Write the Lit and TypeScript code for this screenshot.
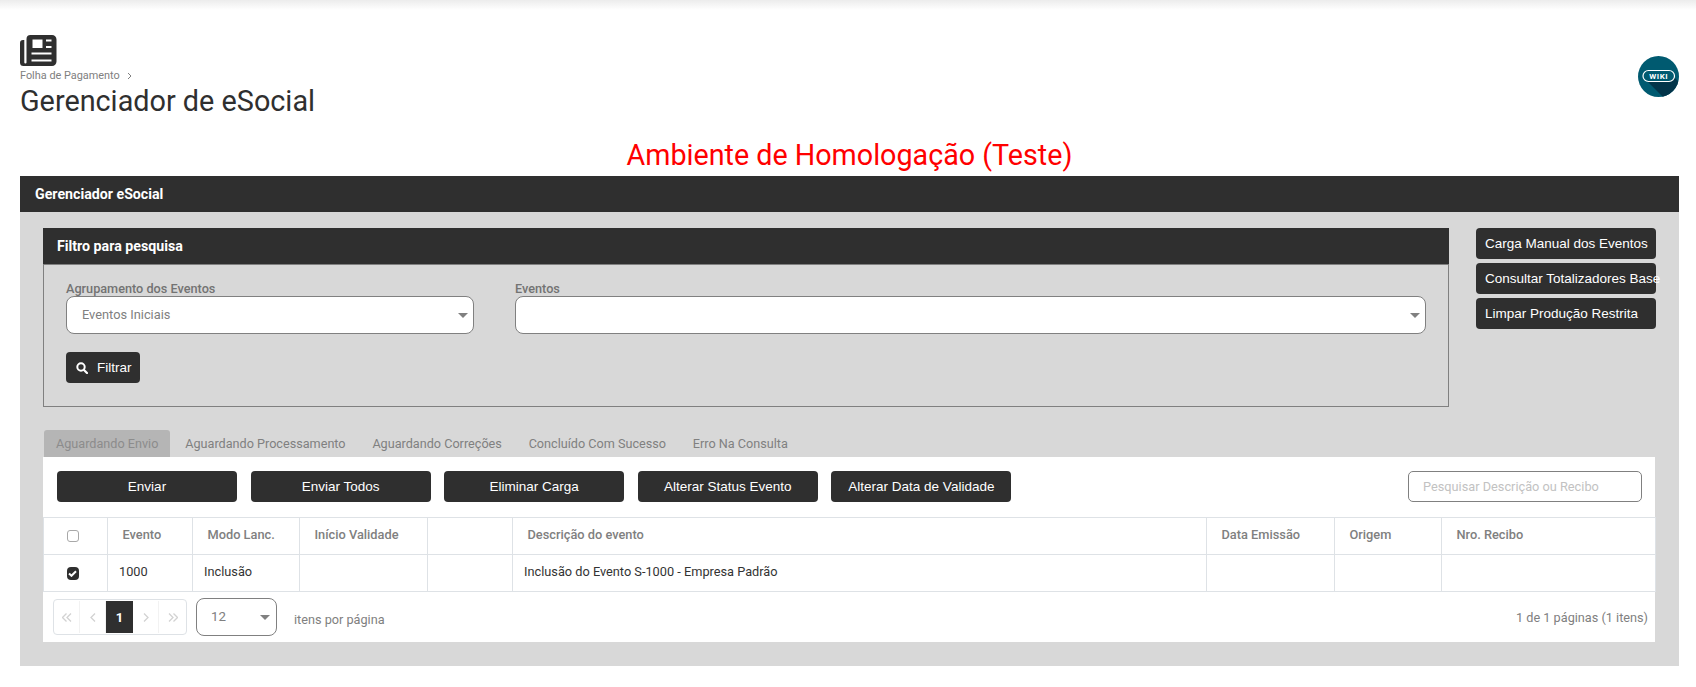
import { LitElement, html, css } from "lit";
import { customElement } from "lit/decorators.js";

const caret = html`<svg class="caret" width="10" height="5" viewBox="0 0 10 5"><path d="M0 0h10L5 5z" fill="#808080"/></svg>`;
const chev = (d: string) => html`<svg width="10" height="9" viewBox="0 0 10 9"><path d=${d} fill="none" stroke="#d2d2d2" stroke-width="1.300"/></svg>`;

@customElement("app-root")
export class AppRoot extends LitElement {
  static styles = css`
    :host { display: block; height: 687px; overflow: hidden; background: #fff; font-family: Roboto, sans-serif; color: #333; }
    * { box-sizing: border-box; }
    .shade { height: 10px; background: linear-gradient(#ececec, #fff); }
    .head { display: flex; justify-content: space-between; padding: 25px 17px 0 20px; height: 142px; }
    .logo { display: block; }
    .crumb { display: flex; align-items: center; gap: 7px; font-size: 10.9px; line-height: 14px; color: #808080; margin-top: 3px; }
    h1 { margin: 0; font-size: 28.8px; font-weight: 400; line-height: 36px; color: #2f2f2f; }
    .wiki { margin-top: 21px; }
    .env { position: absolute; top: 133px; left: 0; width: 1696px; padding-left: 3px; text-align: center; color: #f00; font-size: 28.7px; line-height: 44px; font-weight: 400; }
    .panel { margin: 24px 17px 0 20px; height: 490px; background: #d8d8d8; }
    .panel > header { height: 36px; background: #2f2f2f; color: #fff; font-weight: 700; font-size: 14.2px; line-height: 36px; padding-left: 15px; }
    .body { padding: 16px 24px 0 23px; }
    .top { display: flex; gap: 27px; }
    .filter { width: 1406px; }
    .filter > header { height: 36px; background: #2f2f2f; color: #fff; font-weight: 700; font-size: 14.2px; line-height: 36px; padding-left: 14px; }
    .fbody { height: 143px; border: 1px solid #808080; padding: 16px 22px 0; }
    .fields { display: flex; gap: 41px; }
    .field { display: flex; flex-direction: column; }
    .field.a { width: 408px; }
    .field.b { width: 911px; }
    label { font-size: 12.7px; font-weight: 500; line-height: 14px; padding-top: 1px; color: #737373; }
    .select { display: flex; align-items: center; justify-content: space-between; height: 38px; border: 1px solid #808080; border-radius: 8px; background: #fff; padding: 0 5px 0 15px; font-size: 12.8px; color: #808080; }
    .select .txt { padding-bottom: 2px; }
    .btn { display: flex; align-items: center; justify-content: center; height: 31px; background: #2f2f2f; color: #fff; border: 0; border-radius: 4px; font-family: "Liberation Sans", Arial, sans-serif; font-size: 13.5px; padding: 0; white-space: nowrap; }
    .btn.go { width: 74px; margin-top: 18px; gap: 9px; justify-content: flex-start; padding-left: 10px; }
    .side { display: flex; flex-direction: column; gap: 4px; width: 180px; }
    .side .btn { justify-content: flex-start; padding-left: 9px; width: 180px; }
    .tabs { display: flex; gap: 2.8px; margin: 23px 0 0 1px; height: 27px; font-size: 12.65px; line-height: 28px; color: #808080; }
    .tab { padding: 0 12px; }
    .tab.on { background: #b5b5b5; color: #8c8c8c; border-radius: 3px 3px 0 0; }
    .card { width: 1612px; height: 185px; background: #fff; }
    .tools { display: flex; align-items: center; padding: 14px 13px 15px 14px; gap: 13.6px; }
    .tools .btn { width: 180px; }
    .search { margin-left: auto; width: 234px; height: 31px; border: 1px solid #808080; border-radius: 5px; font-size: 12.75px; line-height: 29px; padding-left: 14px; color: #c2c2c2; }
    table { border-collapse: collapse; table-layout: fixed; width: 1612px; font-size: 12.75px; margin-left: -.5px; }
    th, td { border: 1px solid #dee2e6; height: 37px; text-align: left; padding: 0 0 0 11.5px; font-weight: 400; color: #333; }
    th { font-weight: 500; font-size: 12.8px; color: #808080; padding-left: 15px; padding-bottom: 3px; }
    td { padding-bottom: 3px; }
    th.c, td.c { padding: 0; }
    .box { display: block; width: 12px; height: 12px; margin-left: 23px; border: 1px solid #a8a8a8; border-radius: 3px; background: #fff; }
    .box.on { height: 13px; border: 0; background: #2f2f2f; border-radius: 4px; display: flex; align-items: center; justify-content: center; }
    .foot { display: flex; align-items: center; padding: 6px 7px 0 10px; color: #808080; font-size: 12.7px; }
    .pager { display: flex; width: 134px; height: 36px; padding: 1px 0; border: 1px solid #dee2e6; border-radius: 4px; }
    .pager span { width: 26px; display: flex; align-items: center; justify-content: center; border-right: 1px solid #f2f2f2; }
    .pager span:last-child { border: 0; flex: 1; }
    .pager span.on { width: 27px; background: #2f2f2f; color: #fff; font-weight: 700; font-size: 13px; border: 0; }
    .per { width: 81px; margin-left: 9px; font-size: 13.300px; padding: 0 6px 0 14px; }
    .items { margin: 5px 0 0 17px; }
    .count { margin-left: auto; }
  `;

  render() {
    const tabs = ["Aguardando Envio", "Aguardando Processamento", "Aguardando Correções", "Concluído Com Sucesso", "Erro Na Consulta"];
    const tools = ["Enviar", "Enviar Todos", "Eliminar Carga", "Alterar Status Evento", "Alterar Data de Validade"];
    const cols = [64, 85, 107, 128, 85, 694, 128, 107, 214];
    return html`
      <div class="shade"></div>
      <div class="head">
        <div>
          <svg class="logo" width="37" height="31" viewBox="0 0 37 31">
            <path fill="#2f2f2f" fill-rule="evenodd" d="M6.500 4a4 4 0 0 1 4-4H32a4.500 4.500 0 0 1 4.500 4.500v22A4.500 4.500 0 0 1 32 31H3.500A3.500 3.500 0 0 1 0 27.500V8a3 3 0 0 1 3-3h1.300v22.500a1.100 1.100 0 0 0 2.200 0z M12.500 4.500v8.500h10V4.500z M26 4.500v2h5.500v-2z M26 11v2h5.500v-2z M11.500 17.500v2h20v-2z M11.500 24.500v2h20v-2z"/>
          </svg>
          <div class="crumb">Folha de Pagamento
            <svg width="5" height="8" viewBox="0 0 5 8"><path d="M1 1l3 3-3 3" fill="none" stroke="#808080"/></svg>
          </div>
          <h1>Gerenciador de eSocial</h1>
        </div>
        <svg class="wiki" width="41" height="41" viewBox="0 0 41 41">
          <defs><clipPath id="w"><circle cx="20.500" cy="20.500" r="20.500"/></clipPath></defs>
          <circle cx="20.500" cy="20.500" r="20.500" fill="#005a70"/>
          <path clip-path="url(#w)" d="M9 25L37 22L45 30V45H29z" fill="#023449"/>
          <rect x="5" y="14.500" width="31.500" height="11" rx="5.500" fill="#005a70" stroke="#fff" stroke-width="1.200"/>
          <text x="20.750" y="23" text-anchor="middle" font-family="Roboto" font-size="8" font-weight="700" letter-spacing=".5" fill="#fff">WIKI</text>
        </svg>
      </div>
      <div class="env">Ambiente de Homologação (Teste)</div>
      <section class="panel">
        <header>Gerenciador eSocial</header>
        <div class="body">
          <div class="top">
            <div class="filter">
              <header>Filtro para pesquisa</header>
              <div class="fbody">
                <div class="fields">
                  <div class="field a"><label>Agrupamento dos Eventos</label><div class="select"><span class="txt">Eventos Iniciais</span>${caret}</div></div>
                  <div class="field b"><label>Eventos</label><div class="select"><span></span>${caret}</div></div>
                </div>
                <button class="btn go">
                  <svg width="12" height="12" viewBox="0 0 12 12"><circle cx="5" cy="5" r="3.700" fill="none" stroke="#fff" stroke-width="2"/><path d="M8 8l3 3" stroke="#fff" stroke-width="2.200" stroke-linecap="round"/></svg>
                  Filtrar
                </button>
              </div>
            </div>
            <div class="side">
              <button class="btn">Carga Manual dos Eventos</button>
              <button class="btn">Consultar Totalizadores Base</button>
              <button class="btn">Limpar Produção Restrita</button>
            </div>
          </div>
          <div class="tabs">${tabs.map((t, i) => html`<div class="tab ${i === 0 ? "on" : ""}">${t}</div>`)}</div>
          <div class="card">
            <div class="tools">
              ${tools.map((t) => html`<button class="btn">${t}</button>`)}
              <div class="search">Pesquisar Descrição ou Recibo</div>
            </div>
            <table>
              <colgroup>${cols.map((w) => html`<col style="width:${w}px" />`)}</colgroup>
              <thead><tr>
                <th class="c"><span class="box"></span></th>
                <th>Evento</th><th>Modo Lanc.</th><th>Início Validade</th><th></th><th>Descrição do evento</th><th>Data Emissão</th><th>Origem</th><th>Nro. Recibo</th>
              </tr></thead>
              <tbody><tr>
                <td class="c"><span class="box on"><svg width="9" height="7" viewBox="0 0 9 7"><path d="M1 3.500l2.500 2.300L8 1.200" fill="none" stroke="#fff" stroke-width="2"/></svg></span></td>
                <td>1000</td><td>Inclusão</td><td></td><td></td><td>Inclusão do Evento S-1000 - Empresa Padrão</td><td></td><td></td><td></td>
              </tr></tbody>
            </table>
            <div class="foot">
              <div class="pager">
                <span>${chev("M4.500 .5l-4 4 4 4M9 .5l-4 4 4 4")}</span>
                <span>${chev("M7 .5l-4 4 4 4")}</span>
                <span class="on">1</span>
                <span>${chev("M3 .5l4 4-4 4")}</span>
                <span>${chev("M1 .5l4 4-4 4M5.500 .5l4 4-4 4")}</span>
              </div>
              <div class="select per"><span class="txt">12</span>${caret}</div>
              <div class="items">itens por página</div>
              <div class="count">1 de 1 páginas (1 itens)</div>
            </div>
          </div>
        </div>
      </section>
    `;
  }
}
